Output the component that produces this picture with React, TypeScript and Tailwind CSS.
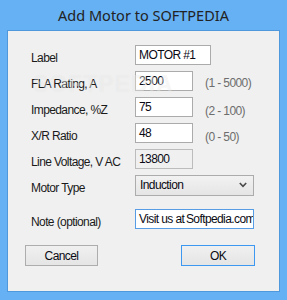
import React from "react";

const lab = "text-[12px] tracking-[-0.6px] text-[#1a1a1a] pt-[5px] w-[104px] leading-[14px]";
const box =
  "h-[20px] border border-[#ababab] bg-white px-[3px] flex items-center text-[12px] tracking-[-0.6px] text-[#0a0a14] leading-[14px] overflow-hidden whitespace-nowrap";

function Row({ label, children }: { label: string; children: React.ReactNode }) {
  return (
    <div className="flex h-[20px] items-center">
      <div className={lab}>{label}</div>
      {children}
    </div>
  );
}

export default function App() {
  return (
    <div
      className="w-[287px] h-[300px] bg-[#66b0f4] px-[7px] flex flex-col"
      style={{ fontFamily: '"Liberation Sans", Arial, sans-serif' }}
    >
      <div
        className="h-[30px] flex items-center justify-center text-[14.5px] text-[#222222] pt-[1px]"
        style={{ fontFamily: '"Noto Sans", "Open Sans", sans-serif' }}
      >
        Add Motor to SOFTPEDIA
      </div>
      <div className="relative w-[273px] h-[262px] border border-[#4f98dc] bg-[#f0f0f0] pl-[23px] pt-[14px]">
        <div className="flex flex-col gap-[6px]">
          <Row label="Label">
            <div className={`${box} w-[76px]`}>MOTOR #1</div>
          </Row>
          <Row label="FLA Rating, A">
            <div className={`${box} w-[58px]`}>2500</div>
            <div className="ml-[12px] pt-[3px] text-[12px] tracking-[-0.6px] text-[#6d6d6d]">(1 - 5000)</div>
          </Row>
          <Row label="Impedance, %Z">
            <div className={`${box} w-[58px]`}>75</div>
            <div className="ml-[12px] pt-[7px] text-[12px] tracking-[-0.6px] text-[#6d6d6d]">(2 - 100)</div>
          </Row>
          <Row label="X/R Ratio">
            <div className={`${box} w-[58px]`}>48</div>
            <div className="ml-[12px] pt-[7px] text-[12px] tracking-[-0.6px] text-[#6d6d6d]">(0 - 50)</div>
          </Row>
          <Row label="Line Voltage, V AC">
            <div className={`${box} w-[58px] !bg-[#f0f0f0] !border-[#bcbcbc]`}>13800</div>
          </Row>
          <Row label="Motor Type">
            <div className="h-[21px] w-[119px] border border-[#acacac] bg-gradient-to-b from-[#f2f2f2] to-[#e5e5e5] px-[4px] flex items-center justify-between text-[12px] tracking-[-0.6px] text-[#0a0a14]">
              <span>Induction</span>
              <svg width="8" height="6" viewBox="0 0 8 6" className="mr-[2px]">
                <path d="M0.8 1 L4 4.4 L7.2 1" fill="none" stroke="#4a4a4a" strokeWidth="1.6" />
              </svg>
            </div>
          </Row>
          <div className="h-[2px]" />
          <Row label="Note (optional)">
            <div className={`${box} w-[119px] !border-[#569de5]`}>
              <span>Visit us at&nbsp;</span>
              <span className="inline-block w-[1px] h-[15px] bg-black -mr-[1px]" />
              <span>Softpedia.com</span>
            </div>
          </Row>
        </div>
        <div className="flex mt-[16px] -ml-[6px]">
          <button className="w-[73px] h-[21px] border border-[#adadad] bg-gradient-to-b from-[#f0f0f0] to-[#e5e5e5] text-[12px] tracking-[-0.6px] text-[#0a0a14] flex items-center justify-center">
            Cancel
          </button>
          <button className="ml-[83px] w-[74px] h-[21px] border border-[#3c98f0] bg-gradient-to-b from-[#f0f0f0] to-[#e5e5e5] text-[12px] tracking-[-0.6px] text-[#0a0a14] flex items-center justify-center">
            OK
          </button>
        </div>
        <div
          className="absolute left-[25px] top-[36px] text-[23px] font-bold tracking-[1px] text-white/40 pointer-events-none"
          style={{ textShadow: "0 0 1px rgba(0,0,0,0.06)" }}
        >
          SOFTPEDIA
        </div>
      </div>
    </div>
  );
}
